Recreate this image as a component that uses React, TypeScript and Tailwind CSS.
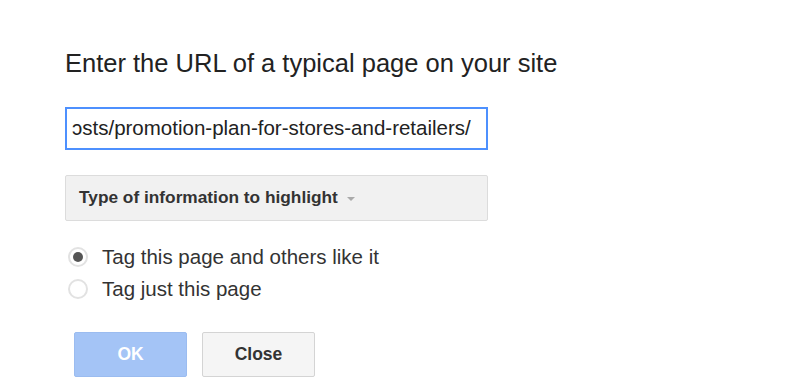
export default function App() {
  return (
    <div className="w-[800px] h-[392px] bg-white font-['Liberation_Sans',Arial,sans-serif] pl-[65px] pt-[49px]">
      <h1 className="text-[25.5px] leading-[28px] text-[#222]">
        Enter the URL of a typical page on your site
      </h1>

      <div className="mt-[30px] w-[423px] h-[43px] border-2 border-[#4d90fe] flex items-center overflow-hidden pl-[5px]">
        <span className="text-[20.5px] text-[#222] whitespace-nowrap">
          ɔsts/promotion-plan-for-stores-and-retailers/
        </span>
      </div>

      <div className="mt-[25px] w-[423px] h-[46px] bg-[#f1f1f1] border border-[#dcdcdc] rounded-[2px] flex items-center pl-[13px]">
        <span className="text-[17.3px] font-bold text-[#333]">
          Type of information to highlight
        </span>
        <span className="ml-[9px] mt-[1px] w-0 h-0 border-l-[4px] border-r-[4px] border-t-[4px] border-l-transparent border-r-transparent border-t-[#aaa]" />
      </div>

      <div className="mt-[24px] flex flex-col gap-[8px]">
        <label className="flex items-center gap-[14px] h-[24px]">
          <span className="w-[20px] h-[20px] rounded-full border-2 border-[#e2e2e2] flex items-center justify-center ml-[3px]">
            <span className="w-[10px] h-[10px] rounded-full bg-[#555]" />
          </span>
          <span className="text-[20.5px] leading-[24px] text-[#333]">Tag this page and others like it</span>
        </label>
        <label className="flex items-center gap-[14px] h-[24px]">
          <span className="w-[20px] h-[20px] rounded-full border-2 border-[#e2e2e2] ml-[3px]" />
          <span className="text-[20.5px] leading-[24px] text-[#333]">Tag just this page</span>
        </label>
      </div>

      <div className="mt-[31px] flex gap-[15px] pl-[9px]">
        <button className="w-[113px] h-[45px] bg-[#a4c4f6] border border-[#9bbcf0] rounded-[2px] text-white font-bold text-[17.5px]">
          OK
        </button>
        <button className="w-[113px] h-[45px] bg-[#f5f5f5] border border-[#d4d4d4] rounded-[2px] text-[#333] font-bold text-[17.5px]">
          Close
        </button>
      </div>
    </div>
  );
}
